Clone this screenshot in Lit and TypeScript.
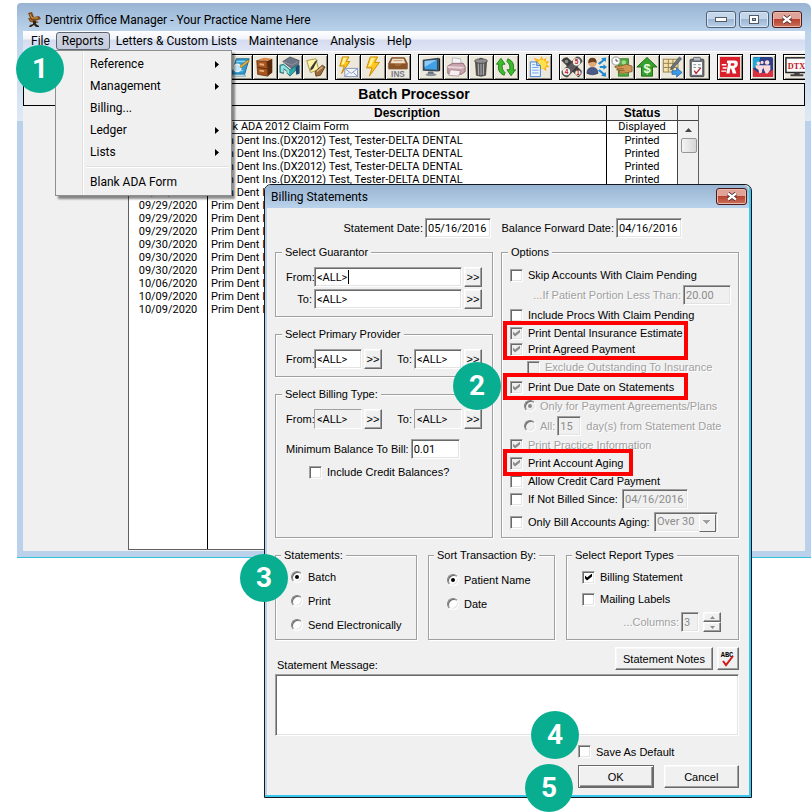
import { LitElement, html, svg, css, nothing } from "lit";
import { customElement, property } from "lit/decorators.js";
import { classMap } from "lit/directives/class-map.js";

const bolt = svg`
  <path d="M9 1 L17 1 L14 7 L19 7 L8 22 L11 13 L5 13 Z" fill="#ffc81c" stroke="#c98400" stroke-width="1"/>
  <path d="M10 2 L14 2 L10 10 L7 12 Z" fill="#fff3a0"/>`;

const icons: Record<string, unknown> = {
  book: svg`
    <path d="M8 3 L22 3 L17 20 L3 20 Z" fill="#2f9bd0" stroke="#14648f"/>
    <path d="M3 20 L17 20 L18 22 L4 22 Z" fill="#e9f4fa" stroke="#14648f" stroke-width=".6"/>
    <path d="M8 6 L18 6 M7 16 L15 16" stroke="#8fd2ef" stroke-width="1.4"/>
    <circle cx="9" cy="13" r="4" fill="#bfe6f7" stroke="#e8eef2" stroke-width="1.6"/>
    <path d="M12 11 L21 4 L22 6 L13 13 Z" fill="#f0b53c" stroke="#7a5410" stroke-width=".6"/>`,
  cabinet: svg`
    <path d="M14 5 L20 3 L20 18 L15 22 Z" fill="#5a280c"/>
    <path d="M4 4 L11 2 L20 3 L14 6 Z" fill="#d98a4c"/>
    <path d="M3 5 L14 6 L15 22 L4 20 Z" fill="#a9541e" stroke="#5c2a0c" stroke-width=".8"/>
    <path d="M3.500 12.500 L14.500 14" stroke="#5c2a0c"/>
    <path d="M6 8 L11 8.500 L11 10.500 L6 10 Z M6 15 L11 15.500 L11 17.500 L6 17 Z" fill="#e8b07c"/>`,
  office: svg`
    <path d="M4 6 L12 1 L22 5 L21 11 L14 14 Z" fill="#6d7484" stroke="#39424f" stroke-width=".7"/>
    <path d="M4 6 L14 10 L21 6" fill="none" stroke="#99a2b2" stroke-width=".8"/>
    <path d="M1 10 L5 9 L12 15 L18 11 L22 10 L22 19 L19 20 L19 15 L12 22 L9 19 L9 17 L5 14 L5 19 L1 18 Z" fill="#2fa7a4" stroke="#1d5d74" stroke-width=".8"/>
    <path d="M2 11 L5 10 L11 15 L11 20 L9 18 L9 16 L5 13 L5 18 L2 17 Z" fill="#9be3df"/>
    <path d="M18 12 L22 10 L22 19 L19 20 Z" fill="#22446e"/>`,
  note: svg`
    <path d="M3 5 L13 3 L16 15 L7 18 Z" fill="#fff3a6" stroke="#8d7a2a" stroke-width=".8"/>
    <path d="M12 6 L15 4 L10 14 L7 16 L7 13 Z" fill="#3a3a32"/>
    <path d="M12 17 L20 10 L23 12 L18 21 L13 22 Z" fill="#9b6a3a" stroke="#4d3014" stroke-width=".8"/>
    <path d="M14 17 L20 12" stroke="#dcb98a" stroke-width="1.4"/>`,
  boltMail: svg`
    <path d="M6 1 L13 1 L10 6 L14 6 L5 19 L8 11 L3 11 Z" fill="#ffc81c" stroke="#c98400"/>
    <path d="M7 2 L11 2 L8 8 L5 10 Z" fill="#fff3a0"/>
    <rect x="8.500" y="13.500" width="14" height="9" fill="#f3f6fc" stroke="#7f95bd"/>
    <path d="M9 14 L15.500 19 L22 14 M9 22 L13 18 M22 22 L18 18" fill="none" stroke="#7f95bd"/>`,
  bolt,
  ins: svg`
    <path d="M5 2 H19 L22 8 V14 H2 V8 Z" fill="#a3683a" stroke="#6b3d1b"/>
    <path d="M6 3 H18 L20 8 H4 Z" fill="#f0dfcb"/><path d="M7 5 H17" stroke="#c49c74"/>
    <path d="M2.500 8.500 H8 L9.500 11 H14.500 L16 8.500 H21.500 V13.500 H2.500 Z" fill="#8c5327"/>
    <text x="12" y="23" text-anchor="middle" font-family="Liberation Sans, sans-serif" font-weight="700" font-size="9" fill="#777785">INS</text>`,
  monitor: svg`
    <path d="M3 4 L20 2 L20 17 L3 16 Z" fill="#3a4654"/>
    <path d="M5 5.500 L18.500 4 L18.500 15 L5 14.500 Z" fill="#3fa0e6"/>
    <path d="M5 5.500 L18.500 4 L5 12 Z" fill="#8fcbf5"/>
    <path d="M20 2 L22 3 L22 16 L20 17 Z" fill="#1d2530"/>
    <path d="M9 17 L14 17 L16 20 L8 20 Z" fill="#66707c"/><ellipse cx="12" cy="20.500" rx="6" ry="1.500" fill="#8b95a0"/>`,
  printer: svg`
    <path d="M8 2 L17 3 L18 10 L8 10 Z" fill="#f4f4f8" stroke="#9a9aa8" stroke-width=".7"/>
    <path d="M3 11 L8 8 L20 8 L22 12 L22 17 L18 20 L3 19 Z" fill="#c9a3ac" stroke="#7d5660" stroke-width=".8"/>
    <path d="M3 11 L22 12 L18 14 L3 13 Z" fill="#ead3d8"/>
    <path d="M6 15 L17 16 L15 22 L4 21 Z" fill="#f6eef0" stroke="#9c7a82" stroke-width=".7"/>`,
  trash: svg`
    <path d="M6 6 H18 L17 21 Q12 23 7 21 Z" fill="#5c5c5c" stroke="#333" stroke-width=".8"/>
    <path d="M9 7 L9.500 21 M12 7 V21 M15 7 L14.500 21" stroke="#b9b9b9" stroke-width="1"/>
    <ellipse cx="12" cy="5.500" rx="7" ry="2.500" fill="#8f8f8f" stroke="#3a3a3a" stroke-width=".8"/>
    <path d="M10 3.500 Q12 1 14 3.500" fill="none" stroke="#3a3a3a"/>`,
  refresh: svg`
    <path d="M10 21 Q2 18 4 9 L1.500 9 L6.500 2.500 L11 9 L8 9 Q7 15 11 18 Z" fill="#3dbb2e" stroke="#1b7411" stroke-width=".9"/>
    <path d="M14 3 Q22 6 20 15 L22.500 15 L17.500 21.500 L13 15 L16 15 Q17 9 13 6 Z" fill="#3dbb2e" stroke="#1b7411" stroke-width=".9"/>`,
  sunDoc: svg`
    <path d="M15 0 L16.500 4 L20 1.500 L19.500 5.500 L23.500 6 L20.500 9 L23.500 12 L19.500 12.500 L20 16.500 L16.500 14 L12 15 L10 10 L3 8 L9.500 7 L6 2 L12.500 4 Z" fill="#ffb31c"/>
    <circle cx="15" cy="9" r="5" fill="#ffe14a"/>
    <path d="M2.500 6.500 H9.500 L13.500 10.500 V22.500 H2.500 Z" fill="#eef5ff" stroke="#3c78c8"/>
    <path d="M9.500 6.500 V10.500 H13.500" fill="#b7d3f5" stroke="#3c78c8"/>
    <path d="M4.500 12.500 H11.500 M4.500 15.500 H11.500 M4.500 18.500 H11.500 M4.500 9.500 H8" stroke="#6b9fe0"/>`,
  digits: svg`
    <path d="M1 5 Q3 1 7 2 L22 16 Q23 20 19 23 Z" fill="#3f3f3f" stroke="#222" stroke-width=".7"/>
    <path d="M17 1 Q22 1 23 6 L7 23 Q1 22 1 17 Z" fill="#5a5a5a" stroke="#222" stroke-width=".7"/>
    <circle cx="17" cy="6.500" r="4" fill="#efefef"/><circle cx="6" cy="17" r="4" fill="#efefef"/><circle cx="18.500" cy="18.500" r="3" fill="#efefef"/>
    <circle cx="6" cy="6" r="2" fill="#8a8a8a"/>
    <g font-family="Liberation Sans, sans-serif" font-weight="700" font-size="7" fill="#c01818" text-anchor="middle">
      <text x="17" y="9">5</text><text x="6" y="20">4</text><text x="18.500" y="21">1</text>
    </g>`,
  user: svg`
    <circle cx="7" cy="7.500" r="4.500" fill="#e0a978"/><path d="M2.500 8 Q2 2 7 2 Q12 2 11.500 8 Q9 4.500 2.500 8 Z" fill="#6b3e1d"/>
    <path d="M1 19 Q1 12.500 7 12.500 Q13 12.500 13 19 Q7 22 1 19 Z" fill="#4a5a86" stroke="#29365a" stroke-width=".7"/>
    <g fill="#1e88d2"><path d="M13 8 L18 4 L16.500 2.500 L22 1.500 L21.500 6.500 L20 5.200 L15 9.500 Z"/>
    <path d="M15 11 H19 V9 L23 12 L19 15 V13 H15 Z"/><path d="M13 16 L18 20 L16.500 21.500 L22 22.500 L21.500 17.500 L20 18.800 L15 14.500 Z"/></g>`,
  money: svg`
    <rect x="8" y="3" width="11" height="19" fill="#4fa83c" stroke="#2a6d1c" stroke-width=".8"/>
    <circle cx="14" cy="7" r="2.500" fill="#a5db8f"/><path d="M10 19 H17" stroke="#a5db8f"/>
    <circle cx="5.500" cy="5.500" r="4.500" fill="#fff" stroke="#8a8a8a"/><path d="M5.500 3 V5.500 H8" fill="none" stroke="#444"/>
    <path d="M4 12 Q5 10 10 11 L17 9 L23 11 V17 L18 18 Q13 20 8 18 L10 16 L6 15 L8 14 Z" fill="#cf9656" stroke="#80501e" stroke-width=".8"/>
    <path d="M8 14 H14 M10 16 H15" stroke="#80501e" stroke-width=".8"/>`,
  upMoney: svg`
    <path d="M12 1.500 L23 12 H18 V22 H6 V12 H1 Z" fill="#37a02e" stroke="#1b6a14"/>
    <text x="12" y="19" text-anchor="middle" font-family="Liberation Sans, sans-serif" font-weight="700" font-size="14" fill="#eaffdc">$</text>`,
  gridPen: svg`
    <rect x="2.500" y="3.500" width="16" height="14" fill="#f6e2ac" stroke="#8f7c4c"/>
    <path d="M2.500 8 H18.500 M2.500 12.500 H18.500 M8 3.500 V17.500 M13 3.500 V17.500" stroke="#8f7c4c"/>
    <path d="M20 1 L22.500 3 L13 14 L10.500 15 L11 12 Z" fill="#6b7884" stroke="#333" stroke-width=".6"/>
    <path d="M12 16 H17 V13 L23 18 L17 23 V20 H12 Z" fill="#3b9ae8" stroke="#1b61a8" stroke-width=".8"/>`,
  clipboard: svg`
    <rect x="4.500" y="3.500" width="15" height="19" rx="1" fill="#6c6f76" stroke="#44464b"/>
    <rect x="6.500" y="6.500" width="11" height="14" fill="#fafafa"/>
    <rect x="8" y="1.500" width="8" height="4" rx="1" fill="#b5b8bf" stroke="#44464b" stroke-width=".8"/>
    <path d="M8 9.500 H11 M13 9.500 H16 M8 12.500 H11 M13 12.500 H16" stroke="#888"/>
    <path d="M9 16 L11 19 L16 13" fill="none" stroke="#b0202a" stroke-width="1.400"/>`,
  redR: svg`
    <rect x="1" y="1" width="22" height="22" fill="#da1f2a"/>
    <path d="M9 5 H17 Q21 5 20.500 9 Q20 12.500 17 13 L19 19 H15 L13.300 13.500 H12.300 L11.500 19 H8 L10 8 H8.500 Z" fill="#fff"/>
    <path d="M13 8 H16 Q17 8 16.800 9.200 Q16.500 10.500 15.500 10.500 H12.700 Z" fill="#da1f2a"/>
    <path d="M3 9.500 H8 M4 13 H8.500 M2.500 16.500 H8" stroke="#fff" stroke-width="1.600"/>`,
  people: svg`
    <rect x="1" y="1" width="22" height="22" rx="2" fill="#2c3f86"/>
    <path d="M1 2 L9 1 L7 10 L1 14 Z" fill="#1fa5d6"/><path d="M1 13 Q8 23 23 15 V23 H1 Z" fill="#d8303f"/>
    <g fill="#fbd9dc"><circle cx="7" cy="8" r="2"/><circle cx="11" cy="7" r="1.700"/><circle cx="16.500" cy="7" r="2.500"/>
    <path d="M4 10 H13 V13 L11 15 V18 L8 19 L7 15 L4 13 Z"/><path d="M13 10 H20 V15 L17 19 H15 L13 15 Z"/></g>`,
  dtx: svg`
    <rect x="1" y="2" width="24" height="16" fill="#fafafa" stroke="#222" stroke-width="1.600"/>
    <text x="3" y="14" font-family="Liberation Serif, serif" font-weight="700" font-size="9" fill="#c0141c">DTX</text>
    <path d="M10 18 H16 V20 H20 V22 H6 V20 H10 Z" fill="#444"/>`,
};

const toolGroups: [string, string][][] = [
  [["book", "Chart"], ["cabinet", "Documents"], ["office", "Office"], ["note", "Notes"]],
  [["boltMail", "Send message"], ["bolt", "Quick post"], ["ins", "Insurance"]],
  [["monitor", "View"], ["printer", "Print"], ["trash", "Delete"], ["refresh", "Refresh"]],
  [["sunDoc", "Day sheet"]],
  [["digits", "Codes"], ["user", "Referrals"], ["money", "Collections"], ["upMoney", "Fees"], ["gridPen", "Ledger"], ["clipboard", "Checklist"]],
  [["redR", "Rx"]],
  [["people", "Family"]],
  [["dtx", "DTX"]],
];

const claim = "Prim Dent Ins.(DX2012) Test, Tester-DELTA DENTAL";
const batchRows: [string, string, string][] = [
  ["09/28/2020", "Blank ADA 2012 Claim Form", "Displayed"],
  ...["09/28", "09/28", "09/28", "09/28", "09/29", "09/29", "09/29", "09/29", "09/30", "09/30", "09/30", "10/06", "10/09", "10/09"]
    .map((d): [string, string, string] => [`${d}/2020`, claim, "Printed"]),
];

@customElement("step-badge")
class StepBadge extends LitElement {
  static styles = css`
    :host {
      position: absolute; z-index: 5; width: 48px; height: 48px; border-radius: 50%;
      background: #09ae91; color: #fff; display: grid; place-items: center;
      font: 700 28px/48px Roboto, sans-serif;
    }`;
  @property() n = "";
  render() { return html`<span>${this.n}</span>`; }
}

@customElement("billing-dialog")
class BillingDialog extends LitElement {
  static styles = css`
    :host {
      display: block; position: relative; box-sizing: border-box;
      border: 1px solid #101820; border-radius: 7px 7px 0 0; background: #f0f0f0;
      box-shadow: inset -2px -2px #3cc8ec, inset 2px 0 #b9d1ea;
      font: 11px/14px "Liberation Sans", sans-serif; color: #000;
    }
    * { box-sizing: border-box; }
    label, legend, .btn { white-space: nowrap; }
    input, button, select, textarea { font: inherit; color: inherit; margin: 0; border-radius: 0; }
    .title {
      display: flex; align-items: center; justify-content: space-between; height: 23px;
      margin-right: 2px; padding: 0 2px 0 6px; border-radius: 6px 6px 0 0;
      background: linear-gradient(#98b4d2, #bad2eb); font: 12px/16px Roboto, sans-serif;
    }
    .title h2 { font: inherit; margin: 0; }
    .close {
      width: 31px; height: 17px; padding: 0; border: 1px solid #4c1a18; border-radius: 3px;
      background: linear-gradient(#e0a397 0 45%, #b8432f 50%, #c9705c); display: grid; place-items: center;
      box-shadow: inset 0 0 0 1px #e9b9ae;
    }
    .body { padding: 10px 12px 9px 10px; }
    .dates { display: grid; grid-template-columns: 216fr 191fr; height: 20px; margin: 0 57px 7px 0; }
    .dates .field { justify-content: flex-end; }
    .field { display: flex; align-items: center; gap: 2px; }
    .text {
      height: 20px; min-width: 0; padding: 0 2px; border: 1px solid; border-color: #a0a0a0 #fff #fff #a0a0a0;
      box-shadow: inset 1px 1px #696969, inset -1px -1px #e3e3e3; background: #fff; outline: none;
      font-family: Roboto, sans-serif;
    }
    .text:disabled, .text.flat { background: #f0f0f0; }
    .text.flat { box-shadow: none; }
    :disabled { color: #8c8c8c; opacity: 1; }
    .w24 { width: 24px; } .w18 { width: 18px; } .w48 { width: 48px; } .w66 { width: 66px; } .w50 { width: 50px; }
    .grow { flex: 1; min-width: 0; }
    .columns { display: grid; grid-template-columns: minmax(0, 218fr) minmax(0, 238fr); gap: 8px; }
    .stack { display: flex; flex-direction: column; gap: 10px; }
    fieldset {
      min-width: 0; margin: 0; padding: 8px 10px 7px 10px; border: 1px solid #a0a0a0;
      box-shadow: 1px 1px #fff, inset 1px 1px #fff;
    }
    legend { margin-left: -4px; padding: 0 3px; background: #f0f0f0; line-height: 14px; }
    .range { display: flex; align-items: center; height: 20px; }
    .range + .range { margin-top: 2px; }
    .range label { width: 28px; padding-right: 2px; text-align: right; }
    .range .second { flex: 1; }
    .range button { margin-left: 2px; }
    .caret { position: relative; display: flex; }
    .caret::after { content: ""; position: absolute; left: 34px; top: 3px; width: 1px; height: 14px; background: #000; }
    .btn {
      height: 23px; padding: 0; border: 1px solid; border-color: #fff #696969 #696969 #fff;
      box-shadow: inset -1px -1px #a0a0a0, inset 1px 1px #f8f8f8; background: #f0f0f0; text-align: center;
    }
    .pick { flex: none; width: 18px; height: 20px; line-height: 16px; }
    .default { border-color: #696969; box-shadow: inset 1px 1px #fff, inset -1px -1px #696969, inset -2px -2px #a0a0a0; }
    .bill-type { flex: 1; }
    .balance { margin: 10px 22px 6px 0; justify-content: flex-end; }
    .credit { margin-left: 23px; height: 14px; }

    .check { display: flex; align-items: center; gap: 5px; }
    .check.off { color: #a0a0a0; text-shadow: 1px 1px #fff; }
    .check input {
      appearance: none; flex: none; width: 13px; height: 13px; background: #fff; display: grid; place-items: center;
      border: 1px solid; border-color: #a0a0a0 #fff #fff #a0a0a0;
      box-shadow: inset 1px 1px #696969, inset -1px -1px #e3e3e3;
    }
    .check input.grey, .check input[type="checkbox"]:disabled { background: #f0f0f0; }
    .check input[type="checkbox"]:checked::before {
      content: ""; width: 7px; height: 7px; background: #000;
      clip-path: polygon(0 28%, 0 71%, 29% 100%, 100% 43%, 100% 0, 29% 58%);
    }
    .check input.grey:checked::before { background: #8c8c8c; }
    .check input[type="radio"] { width: 12px; height: 12px; border-radius: 50%; border-color: #808080 #fff #fff #808080; }
    .check input[type="radio"]:disabled { background: #f0f0f0; }
    .check input[type="radio"]:checked::before { content: ""; width: 4px; height: 4px; border-radius: 50%; background: currentColor; }

    .options { padding: 6px 7px 2px 8px; }
    .options legend { margin-left: -2px; }
    .row { display: flex; align-items: center; height: 20px; position: relative; white-space: nowrap; }
    .h16 { height: 16px; } .h18 { height: 18px; } .h22 { height: 22px; } .h24 { height: 24px; } .h26 { height: 26px; }
    .end { justify-content: flex-end; gap: 2px; }
    .off { color: #a0a0a0; text-shadow: 1px 1px #fff; }
    .sub { margin-left: 17px; }
    .radio-sub { margin-left: 14px; gap: 4px; }
    .mark { position: relative; width: 178px; }
    .mark.short { width: 123px; }
    .mark::after { content: ""; position: absolute; z-index: 2; inset: -4px 0 -3px -7px; border: 4px solid #f00; pointer-events: none; }
    .spread { justify-content: space-between; }
    .pad-date { padding-right: 43px; } .pad-select { padding-right: 13px; }
    .select { position: relative; width: 64px; height: 20px; }
    .select select { appearance: none; width: 64px; padding: 0 2px; }
    .select::after {
      content: ""; position: absolute; right: 2px; top: 2px; width: 15px; height: 16px;
      border: 1px solid; border-color: #fff #696969 #696969 #fff;
      background: linear-gradient(#a0a0a0, #a0a0a0) 3px 5px / 7px 1px no-repeat,
        linear-gradient(#a0a0a0, #a0a0a0) 4px 6px / 5px 1px no-repeat,
        linear-gradient(#a0a0a0, #a0a0a0) 5px 7px / 3px 1px no-repeat,
        linear-gradient(#a0a0a0, #a0a0a0) 6px 8px / 1px 1px no-repeat, #f0f0f0;
    }
    .groups { display: grid; grid-template-columns: minmax(0, 142fr) minmax(0, 127fr) minmax(0, 173fr); gap: 11px; margin-top: 10px; }
    .groups fieldset { padding: 3px 17px 2px 15px; }
    .groups legend { margin-left: -10px; }
    .groups .check { gap: 5px; }
    .groups .sort { padding-top: 6px; padding-left: 18px; padding-right: 0; }
    .groups .sort legend { margin-left: -13px; }
    .spin { display: grid; width: 18px; margin-left: 2px; }
    .spin button { height: 10px; padding: 0; display: grid; place-items: center; }
    .notes { display: flex; align-items: flex-end; height: 25px; margin-top: 7px; gap: 4px; }
    .notes label { flex: 1; padding-left: 2px; }
    .notes .btn { align-self: flex-start; width: 98px; }
    .notes .abc { width: 22px; display: grid; place-items: center; }
    textarea.text { display: block; width: 100%; height: 62px; margin-top: 2px; resize: none; }
    .footer { display: grid; width: 161px; margin: 9px 0 0 auto; gap: 7px; }
    .footer .check { height: 13px; }
    .actions { display: grid; grid-template-columns: 1fr 1fr; gap: 10px; }
    .s2 { left: 188px; top: 177px; }
    .s3 { left: -25px; top: 369px; }
    .s4 { left: 266px; top: 526px; }
    .s5 { left: 260px; top: 579px; }
  `;

  private check(label: string, o: { on?: boolean; off?: boolean; grey?: boolean; cls?: string } = {}) {
    return html`<label class="check ${o.cls ?? ""} ${o.off ? "off" : ""}">
      <input type="checkbox" class=${classMap({ grey: !!o.grey })} ?checked=${o.on} ?disabled=${o.off}>${label}</label>`;
  }

  private radio(name: string, label: string, on = false, off = false, cls = "") {
    return html`<label class="check ${cls} ${off ? "off" : ""}">
      <input type="radio" name=${name} ?checked=${on} ?disabled=${off}>${label}</label>`;
  }

  private pair(id: string, flat = false) {
    const cls = `text w48 ${flat ? "flat" : ""}`;
    return html`<div class="range">
      <label for="${id}-from">From:</label><input id="${id}-from" class=${cls} value="<ALL>"><button class="btn pick">&gt;&gt;</button>
      <label class="second" for="${id}-to">To:</label><input id="${id}-to" class=${cls} value="<ALL>"><button class="btn pick">&gt;&gt;</button>
    </div>`;
  }

  render() {
    return html`
      <header class="title">
        <h2>Billing Statements</h2>
        <button class="close" aria-label="Close">
          <svg width="12" height="9" viewBox="0 0 12 9"><path d="M2 1.500 L10 7.500 M10 1.500 L2 7.500" stroke="#4a2a2a" stroke-width="4"/><path d="M2 1.500 L10 7.500 M10 1.500 L2 7.500" stroke="#fff" stroke-width="2.200"/></svg>
        </button>
      </header>
      <div class="body">
        <div class="dates">
          <div class="field"><label for="sd">Statement Date:</label><input id="sd" class="text w66" value="05/16/2016"></div>
          <div class="field"><label for="bf">Balance Forward Date:</label><input id="bf" class="text w66" value="04/16/2016"></div>
        </div>
        <div class="columns">
          <div class="stack">
            <fieldset>
              <legend>Select Guarantor</legend>
              <div class="range"><label for="g-from">From:</label><span class="caret grow"><input id="g-from" class="text grow" value="<ALL>"></span><button class="btn pick">&gt;&gt;</button></div>
              <div class="range"><label for="g-to">To:</label><input id="g-to" class="text grow" value="<ALL>"><button class="btn pick">&gt;&gt;</button></div>
            </fieldset>
            <fieldset>
              <legend>Select Primary Provider</legend>
              ${this.pair("prov")}
            </fieldset>
            <fieldset class="bill-type">
              <legend>Select Billing Type:</legend>
              ${this.pair("type", true)}
              <div class="field balance"><label for="min">Minimum Balance To Bill:</label><input id="min" class="text w50" value="0.01"></div>
              ${this.check("Include Credit Balances?", { cls: "credit" })}
            </fieldset>
          </div>
          <fieldset class="options">
            <legend>Options</legend>
            <div class="row">${this.check("Skip Accounts With Claim Pending")}</div>
            <div class="row end off"><label for="less">...If Patient Portion Less Than:</label><input id="less" class="text w48" value="20.00" disabled></div>
            <div class="row">${this.check("Include Procs With Claim Pending")}</div>
            <div class="mark">
              <div class="row h16">${this.check("Print Dental Insurance Estimate", { on: true, grey: true })}</div>
              <div class="row h16">${this.check("Print Agreed Payment", { on: true, grey: true })}</div>
            </div>
            <div class="row">${this.check("Exclude Outstanding To Insurance", { off: true, cls: "sub" })}</div>
            <div class="mark"><div class="row">${this.check("Print Due Date on Statements", { on: true, grey: true })}</div></div>
            <div class="row h18">${this.radio("due", "Only for Payment Agreements/Plans", true, true, "radio-sub")}</div>
            <div class="row h22 field">${this.radio("due", "All:", false, true, "radio-sub")}
              <input class="text w24" aria-label="Days" value="15" disabled><span class="off">&nbsp;day(s) from Statement Date</span></div>
            <div class="row h16">${this.check("Print Practice Information", { on: true, off: true, grey: true })}</div>
            <div class="mark short"><div class="row">${this.check("Print Account Aging", { on: true, grey: true })}</div></div>
            <div class="row h16">${this.check("Allow Credit Card Payment")}</div>
            <div class="row spread pad-date">${this.check("If Not Billed Since:")}<input class="text w66" aria-label="Not billed since" value="04/16/2016" disabled></div>
            <div class="row h26 spread pad-select">${this.check("Only Bill Accounts Aging:")}
              <span class="select"><select class="text" aria-label="Aging" disabled><option>Over 30</option></select></span></div>
          </fieldset>
        </div>
        <div class="groups">
          <fieldset>
            <legend>Statements:</legend>
            <div class="row h24">${this.radio("st", "Batch", true)}</div>
            <div class="row h24">${this.radio("st", "Print")}</div>
            <div class="row h24">${this.radio("st", "Send Electronically")}</div>
          </fieldset>
          <fieldset class="sort">
            <legend>Sort Transaction By:</legend>
            <div class="row h24">${this.radio("sort", "Patient Name", true)}</div>
            <div class="row h24">${this.radio("sort", "Date")}</div>
          </fieldset>
          <fieldset>
            <legend>Select Report Types</legend>
            <div class="row h24">${this.check("Billing Statement", { on: true })}</div>
            <div class="row">${this.check("Mailing Labels")}</div>
            <div class="row h26 end off"><label for="cols">...Columns:</label><input id="cols" class="text w18" value="3" disabled>
              <span class="spin">
                <button class="btn" aria-label="More" disabled><svg width="5" height="3"><path d="M0 3 L2.500 0 L5 3 Z" fill="#8c8c8c"/></svg></button>
                <button class="btn" aria-label="Fewer" disabled><svg width="5" height="3"><path d="M0 0 L2.500 3 L5 0 Z" fill="#8c8c8c"/></svg></button>
              </span></div>
          </fieldset>
        </div>
        <div class="notes">
          <label for="msg">Statement Message:</label>
          <button class="btn">Statement Notes</button>
          <button class="btn abc" aria-label="Check spelling">
            <svg width="18" height="18" viewBox="0 0 18 18"><text x="8" y="7" text-anchor="middle" font-family="Liberation Mono, monospace" font-weight="700" font-size="7">ABC</text>
              <path d="M4 11 L7 15 L14 6" fill="none" stroke="#d01818" stroke-width="2"/></svg>
          </button>
        </div>
        <textarea id="msg" class="text"></textarea>
        <div class="footer">
          ${this.check("Save As Default")}
          <div class="actions"><button class="btn default">OK</button><button class="btn">Cancel</button></div>
        </div>
      </div>
      <step-badge class="s2" n="2"></step-badge>
      <step-badge class="s3" n="3"></step-badge>
      <step-badge class="s4" n="4"></step-badge>
      <step-badge class="s5" n="5"></step-badge>`;
  }
}

@customElement("app-root")
class AppRoot extends LitElement {
  static styles = css`
    :host { display: grid; background: #fff; padding: 3px 0 14px; overflow: hidden; align-items: start; color: #000; font: 12px/16px Roboto, sans-serif; }
    * { box-sizing: border-box; }
    button { font: inherit; color: inherit; margin: 0; }
    .window {
      grid-area: 1 / 1; position: relative; margin-left: 17px; min-width: 0; padding: 0 6px 6px; border-bottom: 1px solid #35c3dc; border-radius: 4px 6px 0 0;
      background: linear-gradient(#98b4d2 0, #bad2eb 28px, #dfe9f5 118px, #b9d1ea 118px);
    }
    billing-dialog { grid-area: 1 / 1; margin: 181px 59px 0 264px; }
    .title { display: flex; align-items: center; gap: 4px; height: 28px; padding: 6px 3px 0 4px; }
    .title h1 { flex: 1; font: inherit; margin: 0; }
    .win { display: flex; gap: 3px; margin-top: -2px; }
    .win button {
      width: 30px; height: 17px; padding: 0; border: 1px solid #50627a; border-radius: 3px; display: grid; place-items: center;
      background: linear-gradient(#c4d6ea 0 45%, #9db6d2 50%, #b9d0e8); box-shadow: inset 0 0 0 1px #d9e6f3;
    }
    .win .x { border-color: #4c1a18; background: linear-gradient(#e0a397 0 45%, #b8432f 50%, #c9705c); box-shadow: inset 0 0 0 1px #e9b9ae; }
    .menubar {
      display: flex; align-items: center; height: 21px; padding: 0 0 1px 2px; border-bottom: 1px solid #fff;
      background: linear-gradient(#fff, #f1f4fb 40%, #d5dcf0 45%, #dfe5f4);
    }
    .menubar button { height: 18px; padding: 0 5px; border: 1px solid transparent; border-radius: 3px; background: none; line-height: 16px; }
    .menubar .open { border-color: #5d6672; background: linear-gradient(#d3d8e2, #c3cadb); }
    .tools { display: flex; gap: 7px; height: 31px; padding: 2px 0 0 204px; background: #f0f0f0; overflow: hidden; }
    .group { display: flex; flex: none; height: 26px; padding-left: 1px; background: #000; }
    .tool {
      width: 25px; height: 26px; padding: 0; border: solid #000; border-width: 1px 1px 1px 0;
      background: #ece9dc; box-shadow: inset 1px 1px #fff, inset -1px -1px #8c8c84;
    }
    .tool svg { display: block; padding: 1px; }
    .heading { height: 23px; margin: 0; border: 1px solid #000; background: #f0f0f0; text-align: center; font: 700 14px/21px "Liberation Sans", sans-serif; }
    .client { background: #f0f0f0; padding: 0 106px 1px 105px; }
    .list { display: flex; border: 1px solid #606060; border-top: 0; background: #fff; }
    table { flex: 1; border-collapse: separate; border-spacing: 0; table-layout: fixed; width: 0; font: 11px/13px Roboto, sans-serif; }
    th { height: 15px; padding: 0; background: #f0f0f0; border-bottom: 1px solid #444; font: 700 12px/14px "Liberation Sans", sans-serif; }
    td { height: 13px; padding: 0 0 0 3px; white-space: nowrap; overflow: hidden; line-height: 12px; }
    th + th, td + td { border-left: 1px solid #000; }
    .first td { border-bottom: 1px solid #333; }
    .date { width: 78px; } .state { width: 71px; }
    td.c { text-align: center; padding: 0; }
    .filler td { height: 233px; }
    .scroll { width: 21px; border-left: 1px solid #444; background: #f0f0f0; }
    .scroll .cap { height: 15px; border-bottom: 1px solid #444; }
    .up { display: grid; place-items: center; height: 17px; }
    .thumb { height: 15px; margin: 0 1px 0 3px; border: 1px solid #979797; border-radius: 2px; background: linear-gradient(90deg, #f4f4f4, #d6d6d8); }
    .menu {
      position: absolute; z-index: 3; left: 38px; top: 47px; width: 177px; margin: 0; padding: 2px; list-style: none;
      border: 1px solid #8f8f8f; background: linear-gradient(90deg, #f0f0f0 26px, #e0e0e0 26px 27px, #fff 27px 28px, #f0f0f0 28px);
      box-shadow: 3px 3px 2px rgba(0, 0, 0, .45);
    }
    .menu button { display: flex; align-items: center; justify-content: space-between; width: 100%; height: 22px; padding: 0 10px 0 32px; border: 0; background: none; text-align: left; }
    .menu hr { margin: 3px 0 3px 28px; border: 0; border-top: 1px solid #e0e0e0; border-bottom: 1px solid #fff; }
    .s1 { left: -1px; top: 42px; }
  `;

  private item(label: string, sub = true) {
    return html`<li><button>${label}${sub ? html`<svg width="4" height="7"><path d="M0 0 L4 3.500 L0 7 Z"/></svg>` : nothing}</button></li>`;
  }

  render() {
    return html`
      <main class="window">
        <header class="title">
          <svg width="14" height="16" viewBox="0 0 14 16" aria-hidden="true">
            <path d="M1 1 L5 0 L7 5 L12 4 L14 7 L8 9 L12 10 L10 11 L3 10 L1 6 L3 6 Z" fill="#7a4a1c"/><path d="M3 2 L5 6 L11 6" stroke="#e0a050" fill="none"/>
            <path d="M6 9 H9 V12 L12 14 V15 H9 L7 13 L4 15 H2 L3 13 L6 12 Z" fill="#332415"/><path d="M2 6 L6 9 L4 10 Z" fill="#a86a2a"/>
          </svg>
          <h1>Dentrix Office Manager - Your Practice Name Here</h1>
          <div class="win">
            <button aria-label="Minimize"><svg width="12" height="5"><rect x=".5" y=".5" width="11" height="4" fill="#fff" stroke="#525a66"/></svg></button>
            <button aria-label="Maximize"><svg width="10" height="9"><rect x=".5" y=".5" width="9" height="8" fill="#fff" stroke="#525a66"/><rect x="3.500" y="3.500" width="3" height="2" fill="#9db6d2" stroke="#525a66"/></svg></button>
            <button class="x" aria-label="Close"><svg width="12" height="9" viewBox="0 0 12 9"><path d="M2 1.500 L10 7.500 M10 1.500 L2 7.500" stroke="#4a2a2a" stroke-width="4"/><path d="M2 1.500 L10 7.500 M10 1.500 L2 7.500" stroke="#fff" stroke-width="2.200"/></svg></button>
          </div>
        </header>
        <nav class="menubar">
          <button>File</button><button class="open">Reports</button><button>Letters &amp; Custom Lists</button><button>Maintenance</button><button>Analysis</button><button>Help</button>
        </nav>
        <div class="tools">
          ${toolGroups.map((g) => html`<div class="group">${g.map(([k, name]) => html`<button class="tool" aria-label=${name}><svg width="24" height="24" viewBox="0 0 24 24">${icons[k]}</svg></button>`)}</div>`)}
        </div>
        <h2 class="heading">Batch Processor</h2>
        <div class="client">
          <div class="list">
            <table>
              <thead><tr><th class="date">Date</th><th>Description</th><th class="state">Status</th></tr></thead>
              <tbody>
                ${batchRows.map(([d, t, s], i) => html`<tr class=${i === 0 ? "first" : ""}><td class="c">${d}</td><td>${t}</td><td class="c">${s}</td></tr>`)}
                <tr class="filler"><td></td><td></td><td></td></tr>
              </tbody>
            </table>
            <div class="scroll">
              <div class="cap"></div>
              <div class="up"><svg width="7" height="4"><path d="M0 4 L3.500 0 L7 4 Z" fill="#444"/></svg></div>
              <div class="thumb"></div>
            </div>
          </div>
        </div>
        <ul class="menu">
          ${this.item("Reference")}${this.item("Management")}${this.item("Billing...", false)}${this.item("Ledger")}${this.item("Lists")}
          <li><hr></li>
          ${this.item("Blank ADA Form", false)}
        </ul>
        <step-badge class="s1" n="1"></step-badge>
      </main>
      <billing-dialog role="dialog" aria-label="Billing Statements"></billing-dialog>`;
  }
}
